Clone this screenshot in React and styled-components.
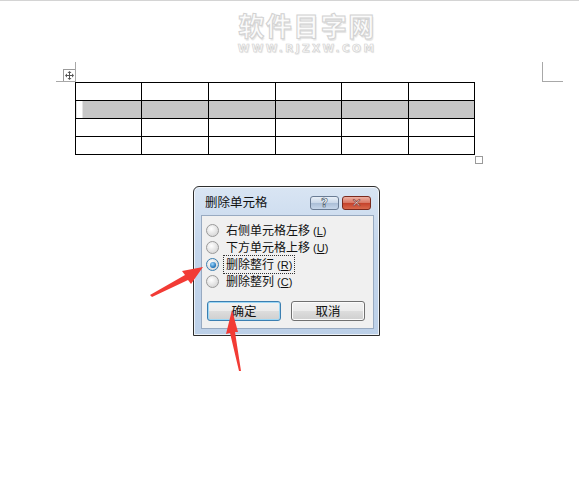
import React from "react";
import styled, { createGlobalStyle } from "styled-components";

const Global = createGlobalStyle`
  html, body {
    margin: 0;
    padding: 0;
    background: #ffffff;
  }
  body {
    font-family: "Noto Sans CJK SC", "Liberation Sans", sans-serif;
  }
`;

const Page = styled.div`
  position: relative;
  width: 579px;
  height: 486px;
  overflow: hidden;
  background: #fff;
  border-top: 1px solid #d4d4d4;
  box-sizing: border-box;
`;

const Watermark = styled.div`
  display: flex;
  flex-direction: column;
  align-items: center;
  padding-left: 35px;
  padding-top: 10px;
  height: 53px;
  box-sizing: border-box;
  .big {
    font-family: "Noto Sans CJK SC", sans-serif;
    font-weight: 700;
    font-size: 26px;
    line-height: 27px;
    letter-spacing: 1.5px;
    color: #fbfbfb;
    -webkit-text-stroke: 1px #d2d2d2;
    text-shadow: 1px 2px 1px #e4e4e4;
  }
  .small {
    margin-top: 5px;
    font-family: "DejaVu Sans", sans-serif;
    font-weight: 700;
    font-size: 10.5px;
    line-height: 11px;
    letter-spacing: 2.4px;
    color: #fafafa;
    -webkit-text-stroke: 0.6px #cfcfcf;
    text-shadow: 1px 1px 1px #e6e6e6;
  }
`;

const Body = styled.div`
  margin-left: 75px;
  width: 468px;
  padding-top: 8px;
`;

const MarginRow = styled.div`
  display: flex;
  justify-content: space-between;
  height: 20px;
`;

const Corner = styled.div`
  width: 19px;
  height: 19px;
  border-bottom: 1px solid #a8a8a8;
  ${(p) =>
    p.side === "left"
      ? `margin-left: -19px; border-right: 1px solid #a8a8a8; display: flex; align-items: flex-end; justify-content: flex-end;`
      : `margin-right: -20px; width: 20px; border-left: 1px solid #a8a8a8;`}
`;

const MoveHandle = styled.div`
  width: 11px;
  height: 11px;
  border: 1px solid #9a9a9a;
  border-right: none;
  border-bottom: none;
  background: #fff;
  display: flex;
  align-items: center;
  justify-content: center;
`;

const Grid = styled.table`
  border-collapse: collapse;
  table-layout: fixed;
  td {
    border: 1px solid #000;
    height: 17px;
    padding: 0;
  }
`;

const Cell = styled.td`
  width: ${(p) => p.w}px;
  background: ${(p) =>
    p.shade
      ? p.first
        ? "linear-gradient(to right, #fff 6px, #c6c6c6 6px)"
        : "#c6c6c6"
      : "#fff"};
`;

const ResizeRow = styled.div`
  width: 408px;
  display: flex;
  justify-content: flex-end;
  margin-top: 1px;
`;

const ResizeBox = styled.div`
  width: 6px;
  height: 6px;
  border: 1px solid #9a9a9a;
`;

const Dialog = styled.div`
  margin-top: 22px;
  margin-left: 118px;
  width: 187px;
  height: 150px;
  box-sizing: border-box;
  border: 1px solid #2e2e2e;
  border-radius: 6px 6px 0 0;
  background: linear-gradient(#d9e5f3, #c4d6ec 40%, #bcd0e8);
  box-shadow: inset 0 0 0 1px rgba(255, 255, 255, 0.7);
  display: flex;
  flex-direction: column;
  padding: 0 5px 6px 7px;
`;

const TitleBar = styled.div`
  height: 28px;
  display: flex;
  align-items: center;
  justify-content: space-between;
  padding-left: 4px;
  font-size: 12.5px;
  color: #111;
`;

const Caps = styled.div`
  display: flex;
  gap: 3px;
  align-self: flex-start;
  margin-top: 9px;
  margin-right: 3px;
`;

const CapButton = styled.div`
  width: 29px;
  height: 14px;
  box-sizing: border-box;
  border: 1px solid ${(p) => (p.red ? "#7a2a1e" : "#6a7c94")};
  border-radius: 3px;
  background: ${(p) =>
    p.red
      ? "linear-gradient(#eeb1a4, #d77561 50%, #c4412a 51%, #d9694c)"
      : "linear-gradient(#e9f0f8, #c8d6e8 50%, #a9bdd6 51%, #c6d6ea)"};
  display: flex;
  align-items: center;
  justify-content: center;
  font-family: "DejaVu Sans", sans-serif;
  font-weight: 700;
  font-size: 12px;
  line-height: 1;
  color: #fff;
  -webkit-text-stroke: 0.6px ${(p) => (p.red ? "#7a2a1e" : "#3d4d62")};
`;

const Panel = styled.div`
  flex: 1;
  background: #f0f0f0;
  border: 1px solid #98aac1;
  display: flex;
  flex-direction: column;
  padding: 6px 0 0 4px;
`;

const Options = styled.div`
  display: flex;
  flex-direction: column;
`;

const Option = styled.label`
  height: 17px;
  display: flex;
  align-items: center;
  gap: 4px;
  font-size: 12px;
  color: #111;
`;

const Radio = styled.span`
  width: 11px;
  height: 11px;
  border-radius: 50%;
  border: 1px solid ${(p) => (p.checked ? "#3c7fb1" : "#9a9a9a")};
  background: radial-gradient(circle at 40% 35%, #ffffff, #d6d6d6 80%);
  display: flex;
  align-items: center;
  justify-content: center;
  &::after {
    content: "";
    display: ${(p) => (p.checked ? "block" : "none")};
    width: 6px;
    height: 6px;
    border-radius: 50%;
    background: radial-gradient(circle at 40% 35%, #9fd8ff, #1c6fb4 70%, #0b3f76);
  }
`;

const OptText = styled.span`
  padding: 0 2px;
  line-height: 15px;
  border: 1px dotted ${(p) => (p.focus ? "#333" : "transparent")};
  u {
    text-decoration: underline;
  }
  .key {
    font-family: "Liberation Sans", sans-serif;
    font-size: 11px;
    margin-left: 3px;
  }
`;

const Buttons = styled.div`
  display: flex;
  gap: 10px;
  margin-top: 11px;
  padding-left: 1px;
`;

const Button = styled.button`
  width: 74px;
  height: 20px;
  box-sizing: border-box;
  border-radius: 3px;
  border: 1px solid ${(p) => (p.primary ? "#3c7fb1" : "#707070")};
  box-shadow: ${(p) => (p.primary ? "inset 0 0 0 1px #9cd7f5" : "inset 0 0 0 1px #fbfbfb")};
  background: linear-gradient(#f2f2f2, #ebebeb 50%, #dddddd 51%, #cfcfcf);
  font-family: "Noto Sans CJK SC", sans-serif;
  font-size: 12.5px;
  color: #111;
  padding: 0;
  line-height: 18px;
`;

const Overlay = styled.svg`
  position: absolute;
  left: 0;
  top: 0;
  pointer-events: none;
`;

const widths = [65, 66, 66, 65, 66, 65];

const options = [
  { text: "右侧单元格左移", key: "L" },
  { text: "下方单元格上移", key: "U" },
  { text: "删除整行", key: "R", checked: true },
  { text: "删除整列", key: "C" },
];

export default function App() {
  return (
    <>
      <Global />
      <Page>
        <Watermark>
          <div className="big">软件目字网</div>
          <div className="small">WWW.RJZXW.COM</div>
        </Watermark>
        <Body>
          <MarginRow>
            <Corner side="left">
              <MoveHandle>
                <svg width="9" height="9" viewBox="0 0 9 9" fill="#555">
                  <rect x="4" y="1" width="1" height="7" />
                  <rect x="1" y="4" width="7" height="1" />
                  <path d="M4.5 0 L6.5 2 H2.5 Z M4.5 9 L2.5 7 H6.5 Z M0 4.5 L2 2.5 V6.5 Z M9 4.5 L7 6.5 V2.5 Z" />
                </svg>
              </MoveHandle>
            </Corner>
            <Corner side="right" />
          </MarginRow>
          <Grid>
            <tbody>
              {[0, 1, 2, 3].map((r) => (
                <tr key={r}>
                  {widths.map((w, c) => (
                    <Cell key={c} w={w} shade={r === 1} first={c === 0} />
                  ))}
                </tr>
              ))}
            </tbody>
          </Grid>
          <ResizeRow>
            <ResizeBox />
          </ResizeRow>
          <Dialog>
            <TitleBar>
              <span>删除单元格</span>
              <Caps>
                <CapButton>?</CapButton>
                <CapButton red>✕</CapButton>
              </Caps>
            </TitleBar>
            <Panel>
              <Options>
                {options.map((o) => (
                  <Option key={o.key}>
                    <Radio checked={o.checked} />
                    <OptText focus={o.checked}>
                      {o.text}
                      <span className="key">
                        (<u>{o.key}</u>)
                      </span>
                    </OptText>
                  </Option>
                ))}
              </Options>
              <Buttons>
                <Button primary>确定</Button>
                <Button>取消</Button>
              </Buttons>
            </Panel>
          </Dialog>
        </Body>
        <Overlay width="579" height="486" viewBox="0 0 579 486">
          <path
            d="M150 294 L185 274 L182 270 L203 266 L191 283 L188 279 L152 296 Z"
            fill="#f23b35"
          />
          <path
            d="M232 309 L238 331 L235 331 L241 370 L239 370 L230 332 L226 333 Z"
            fill="#f23b35"
          />
        </Overlay>
      </Page>
    </>
  );
}
